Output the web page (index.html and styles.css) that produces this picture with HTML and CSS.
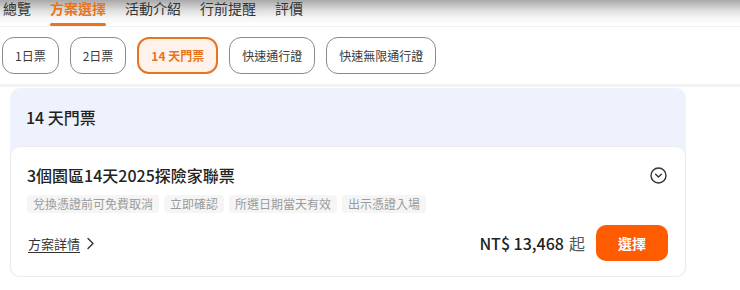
FILE: index.html
```html
<!DOCTYPE html>
<html lang="zh-Hant">
<head>
<meta charset="utf-8">
<link rel="stylesheet" href="styles.css">
</head>
<body>
<nav class="nav">
  <a class="nav-item">總覽</a>
  <a class="nav-item active">方案選擇</a>
  <a class="nav-item">活動介紹</a>
  <a class="nav-item">行前提醒</a>
  <a class="nav-item">評價</a>
</nav>
<div class="pills">
  <button class="pill">1日票</button>
  <button class="pill">2日票</button>
  <button class="pill active">14 天門票</button>
  <button class="pill">快速通行證</button>
  <button class="pill">快速無限通行證</button>
</div>
<section class="group">
  <div class="group-head">14 天門票</div>
  <div class="plan">
    <div class="plan-top">
      <h3 class="plan-title">3個園區14天2025探險家聯票</h3>
      <svg class="toggle" width="17" height="17" viewBox="0 0 17 17"><circle cx="8.5" cy="8.5" r="7.5" fill="none" stroke="#333" stroke-width="1.4"/><path d="M5.6 7.3 L8.5 10 L11.4 7.3" fill="none" stroke="#333" stroke-width="1.4" stroke-linecap="round" stroke-linejoin="round"/></svg>
    </div>
    <div class="tags">
      <span class="tag">兌換憑證前可免費取消</span>
      <span class="tag">立即確認</span>
      <span class="tag">所選日期當天有效</span>
      <span class="tag">出示憑證入場</span>
    </div>
    <div class="plan-bottom">
      <a class="details">方案詳情<svg width="9" height="13" viewBox="0 0 9 13"><path d="M2 1.5 L7 6.5 L2 11.5" fill="none" stroke="#333" stroke-width="1.4" stroke-linecap="round" stroke-linejoin="round"/></svg></a>
      <div class="buy">
        <span class="price">NT$ 13,468</span>
        <span class="from">起</span>
        <button class="select">選擇</button>
      </div>
    </div>
  </div>
</section>
</body>
</html>
```
FILE: styles.css
```css
* { box-sizing: border-box; }
body {
  margin: 0;
  background: #fff;
  font-family: "Noto Sans CJK TC", "Noto Sans", sans-serif;
  color: #333;
}
.nav {
  display: flex;
  gap: 19px;
  height: 27px;
  padding: 1px 0 0 3px;
  background: linear-gradient(to bottom, #a9a9a9 0px, #dcdcdc 10px, #f6f6f6 18px, #ffffff 24px);
  border-bottom: 1px solid #f1f1f1;
}
.nav-item {
  display: block;
  font-size: 14px;
  line-height: 14px;
  color: #333;
  height: 25px;
  position: relative;
}
.nav-item.active {
  color: #e8741f;
  font-weight: 700;
}
.nav-item.active::after {
  content: "";
  position: absolute;
  left: 0;
  right: 0;
  bottom: 0;
  height: 3px;
  background: #e8741f;
  border-radius: 2px;
}
.pills {
  display: flex;
  gap: 11px;
  padding: 10px 0 10px 2px;
  border-bottom: 3px solid #f2f2f2;
}
.pill {
  height: 37px;
  padding: 0 12px;
  border: 1px solid #8a8a8a;
  border-radius: 12px;
  background: #fff;
  font-family: inherit;
  font-size: 12px;
  color: #3a3a3a;
  white-space: nowrap;
}
.pill.active {
  border: 2px solid #e8741f;
  background: #fff2ea;
  color: #e8741f;
  font-weight: 700;
}
.group {
  margin: 1px 0 0 10px;
  width: 676px;
  background: #edf2fc;
  border-radius: 10px;
}
.group-head {
  height: 58px;
  padding-left: 16px;
  display: flex;
  align-items: center;
  font-size: 16px;
  font-weight: 500;
  color: #222;
}
.plan {
  background: #fff;
  border: 1px solid #ececec;
  border-radius: 10px;
  padding: 16px 17px 15px 16px;
  box-shadow: 0 1px 2px rgba(0,0,0,0.04);
}
.plan-top {
  display: flex;
  justify-content: space-between;
  align-items: center;
}
.plan-title {
  margin: 0;
  font-size: 16px;
  line-height: 24px;
  font-weight: 500;
  color: #222;
}
.toggle { margin-right: 1px; }
.tags {
  display: flex;
  gap: 5px;
  margin-top: 8px;
}
.tag {
  height: 18px;
  line-height: 18px;
  padding: 0 6px;
  background: #f5f5f5;
  border-radius: 4px;
  font-size: 12px;
  color: #9b9b9b;
}
.plan-bottom {
  display: flex;
  justify-content: space-between;
  align-items: center;
  margin-top: 12px;
}
.details {
  display: flex;
  align-items: center;
  gap: 6px;
  font-size: 13px;
  color: #333;
  text-decoration: underline;
  text-underline-offset: 3px;
  margin-left: 1px;
}
.buy {
  display: flex;
  align-items: center;
}
.price {
  font-size: 16px;
  font-weight: 500;
  color: #222;
}
.from {
  font-size: 16px;
  color: #555;
  margin-left: 5px;
}
.select {
  margin-left: 11px;
  width: 72px;
  height: 36px;
  border: none;
  border-radius: 10px;
  background: #ff5b00;
  color: #fff;
  font-family: inherit;
  font-size: 14px;
  font-weight: 700;
}
```
